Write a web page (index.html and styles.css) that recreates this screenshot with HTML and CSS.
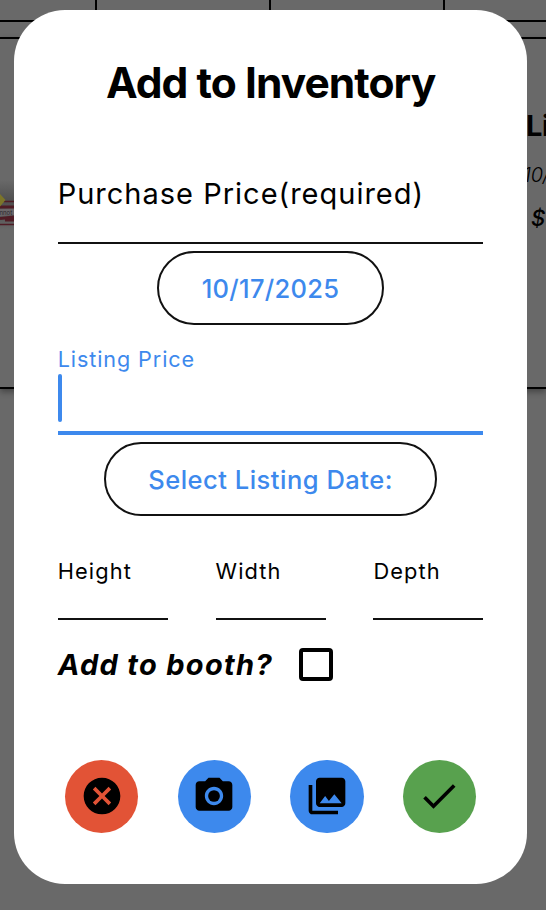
FILE: index.html
```html
<!DOCTYPE html>
<html lang="en">
<head>
<meta charset="utf-8">
<title>Add to Inventory</title>
<link rel="stylesheet" href="styles.css">
</head>
<body>
<div class="screen">
  <div class="backdrop">
    <div class="tabs"><span></span><span></span><span></span><span></span></div>
    <div class="item">
      <svg class="thumb" viewBox="0 0 14 50" width="14" height="50">
        <defs><linearGradient id="shade" x1="0" y1="0" x2="0" y2="1"><stop offset="0" stop-color="#696969"/><stop offset=".4" stop-color="#505050"/><stop offset=".8" stop-color="#5c5c5c"/><stop offset="1" stop-color="#696969"/></linearGradient></defs>
        <path d="M0 0h14v50H0z" fill="url(#shade)"/>
        <path d="M0 29l14-1v7l-14 1z" fill="#6b6769"/>
        <path d="M4 21.500h10M0 44.500h14" stroke="#501c25" stroke-width="1.500"/>
        <path d="M0 27h14M0 38.500l14-1.500M5 40h9" stroke="#501c25" stroke-width="3"/>
        <path d="M0 14l5.500 6L0 26.500z" fill="#7c7529"/>
        <text x="-.5" y="34.500" font-size="6" font-family="Inter" fill="#2a2529">nnot</text>
      </svg>
      <div class="summary">
        <div class="name">Li</div>
        <div class="date">10/</div>
        <div class="cost">$</div>
      </div>
    </div>
  </div>
  <form class="dialog">
    <h1>Add to Inventory</h1>
    <div class="field">Purchase Price(required)</div>
    <div class="pill pill-purchase">10/17/2025</div>
    <div class="field-active"><div class="label">Listing Price</div><div class="caret"></div></div>
    <div class="pill pill-listing">Select Listing Date:</div>
    <div class="dims"><div>Height</div><div>Width</div><div>Depth</div></div>
    <div class="booth"><span class="booth-label">Add to booth?</span><span class="box"></span></div>
    <div class="actions">
      <div class="action red"><svg viewBox="0 0 24 24"><path d="M12 2C6.470 2 2 6.470 2 12s4.470 10 10 10 10-4.470 10-10S17.530 2 12 2zm5 13.590L15.590 17 12 13.410 8.410 17 7 15.590 10.590 12 7 8.410 8.410 7 12 10.590 15.590 7 17 8.410 13.410 12 17 15.590z"/></svg></div>
      <div class="action blue"><svg viewBox="0 0 24 24"><circle cx="12" cy="12" r="3.200"/><path d="M9 2L7.170 4H4c-1.100 0-2 .9-2 2v12c0 1.100.9 2 2 2h16c1.100 0 2-.9 2-2V6c0-1.100-.9-2-2-2h-3.170L15 2H9zm3 15c-2.760 0-5-2.240-5-5s2.240-5 5-5 5 2.240 5 5-2.240 5-5 5z"/></svg></div>
      <div class="action blue"><svg viewBox="0 0 24 24"><path d="M22 16V4c0-1.100-.9-2-2-2H8c-1.100 0-2 .9-2 2v12c0 1.100.9 2 2 2h12c1.100 0 2-.9 2-2zm-11-4l2.030 2.710L16 11l4 5H8l3-4zM2 6v14c0 1.100.9 2 2 2h14v-2H4V6H2z"/></svg></div>
      <div class="action green"><svg viewBox="0 0 24 24"><path d="M9 16.170L4.830 12l-1.420 1.410L9 19 21 7l-1.410-1.410z"/></svg></div>
    </div>
  </form>
</div>
</body>
</html>
```
FILE: styles.css
```css
* { box-sizing: border-box; }
body { margin: 0; font-family: Inter, sans-serif; color: #000; }
.screen { position: relative; width: 546px; height: 910px; overflow: hidden; background: #696969; }
.tabs { display: grid; grid-template-columns: 97px 174px 174px 1fr; height: 22px; border-bottom: 2px solid #000; }
.tabs span { border-right: 2px solid #000; }
.tabs span:last-child { border-right: 0; }
.item { display: flex; justify-content: space-between; height: 352px; margin-top: 15px; border-top: 2px solid #000; border-bottom: 2px solid #000; box-shadow: 0 3px 6px rgba(0,0,0,.35); }
.thumb { margin-top: 141px; }
.summary { width: 20px; padding-top: 67px; white-space: nowrap; }
.name { font-size: 29px; font-weight: 700; line-height: 40px; letter-spacing: -.5px; }
.date { margin: 14px 0 0 -3px; font-size: 20px; font-style: italic; font-weight: 300; line-height: 30px; letter-spacing: -.2px; }
.cost { margin: 13px 0 0 5px; font-size: 22px; font-style: italic; font-weight: 500; line-height: 30px; }
.dialog { position: absolute; left: 13.7px; top: 9.5px; width: 513.800px; height: 874.800px; padding: 47.500px 44px 0; border-radius: 51px; background: #fff; }
h1 { margin: 0; font-size: 42.500px; line-height: 51px; font-weight: 700; letter-spacing: -.95px; text-align: center; white-space: nowrap; }
.field { margin-top: 57.200px; height: 79.300px; border-bottom: 2px solid #111; font-size: 29px; line-height: 57px; letter-spacing: 1px; white-space: nowrap; }
.pill { display: flex; align-items: center; justify-content: center; height: 74px; margin: 0 auto; border: 2px solid #111; border-radius: 37px; color: #3d89ed; font-size: 25.500px; font-weight: 500; letter-spacing: .5px; white-space: nowrap; }
.pill-purchase { width: 227px; margin-top: 7px; letter-spacing: .3px; }
.pill-listing { width: 333.500px; margin-top: 7px; }
.field-active { margin-top: 18.500px; height: 91.500px; border-bottom: 4px solid #3d89ed; }
.label { color: #3d89ed; font-size: 21.600px; line-height: 30px; letter-spacing: .9px; }
.caret { width: 4px; height: 48px; margin-top: 0; border-radius: 2px; background: #3d89ed; }
.dims { display: grid; grid-template-columns: repeat(3, 110px); justify-content: space-between; margin-top: 40px; }
.dims div { height: 64px; border-bottom: 2px solid #111; font-size: 21.800px; line-height: 31px; letter-spacing: 1.1px; }
.booth { display: flex; align-items: center; height: 40px; margin-top: 24px; }
.booth-label { width: 241.600px; font-size: 29px; font-style: italic; font-weight: 700; letter-spacing: 1.3px; white-space: nowrap; }
.box { width: 33.500px; height: 33.500px; border: 4px solid #000; border-radius: 4px; }
.actions { display: flex; justify-content: space-between; margin-top: 75.200px; padding: 0 7.300px; }
.action { display: flex; align-items: center; justify-content: center; width: 73.500px; height: 73.500px; border-radius: 50%; }
.action svg { width: 44px; height: 44px; }
.red { background: #e25336; }
.blue { background: #3d89ed; }
.green { background: #58a14e; }
```
